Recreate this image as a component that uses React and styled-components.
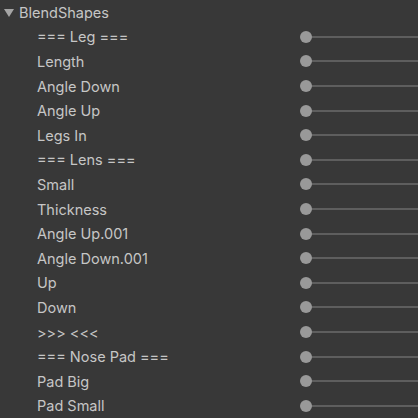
import React from 'react';
import styled, { createGlobalStyle } from 'styled-components';

const GlobalStyle = createGlobalStyle`
    html, body {
        margin: 0;
        padding: 0;
        background-color: #383838;
        overflow: hidden;
    }
`;

const Panel = styled.div`
    width: 418px;
    height: 418px;
    background-color: #383838;
    font-family: Inter, "Noto Sans", sans-serif;
    font-size: 14.5px;
    color: #c6c6c6;
`;

const Header = styled.div`
    display: flex;
    align-items: center;
    height: 24.6px;
    padding-left: 4px;
    gap: 5px;
`;

const Arrow = styled.span`
    width: 0;
    height: 0;
    border-left: 5px solid transparent;
    border-right: 5px solid transparent;
    border-top: 8px solid #a5a5a5;
    margin-top: 1px;
`;

const Row = styled.div`
    display: grid;
    grid-template-columns: 300px 1fr;
    align-items: center;
    height: 24.6px;
`;

const Label = styled.span`
    padding-left: 37px;
    white-space: nowrap;
`;

const Slider = styled.div`
    position: relative;
    height: 12px;
    display: flex;
    align-items: center;

    &::before {
        content: '';
        position: absolute;
        left: 6px;
        right: 0;
        height: 2px;
        background-color: #5e5e5e;
    }
`;

const Thumb = styled.span`
    position: relative;
    width: 12px;
    height: 12px;
    border-radius: 50%;
    background-color: #999999;
`;

const shapes = [
    '=== Leg ===',
    'Length',
    'Angle Down',
    'Angle Up',
    'Legs In',
    '=== Lens ===',
    'Small',
    'Thickness',
    'Angle Up.001',
    'Angle Down.001',
    'Up',
    'Down',
    '>>> <<<',
    '=== Nose Pad ===',
    'Pad Big',
    'Pad Small'
];

export default function App() {
    return (
        <Panel>
            <GlobalStyle />
            <Header>
                <Arrow />
                <span>BlendShapes</span>
            </Header>
            {shapes.map((name, i) => (
                <Row key={i}>
                    <Label>{name}</Label>
                    <Slider>
                        <Thumb />
                    </Slider>
                </Row>
            ))}
        </Panel>
    );
}
